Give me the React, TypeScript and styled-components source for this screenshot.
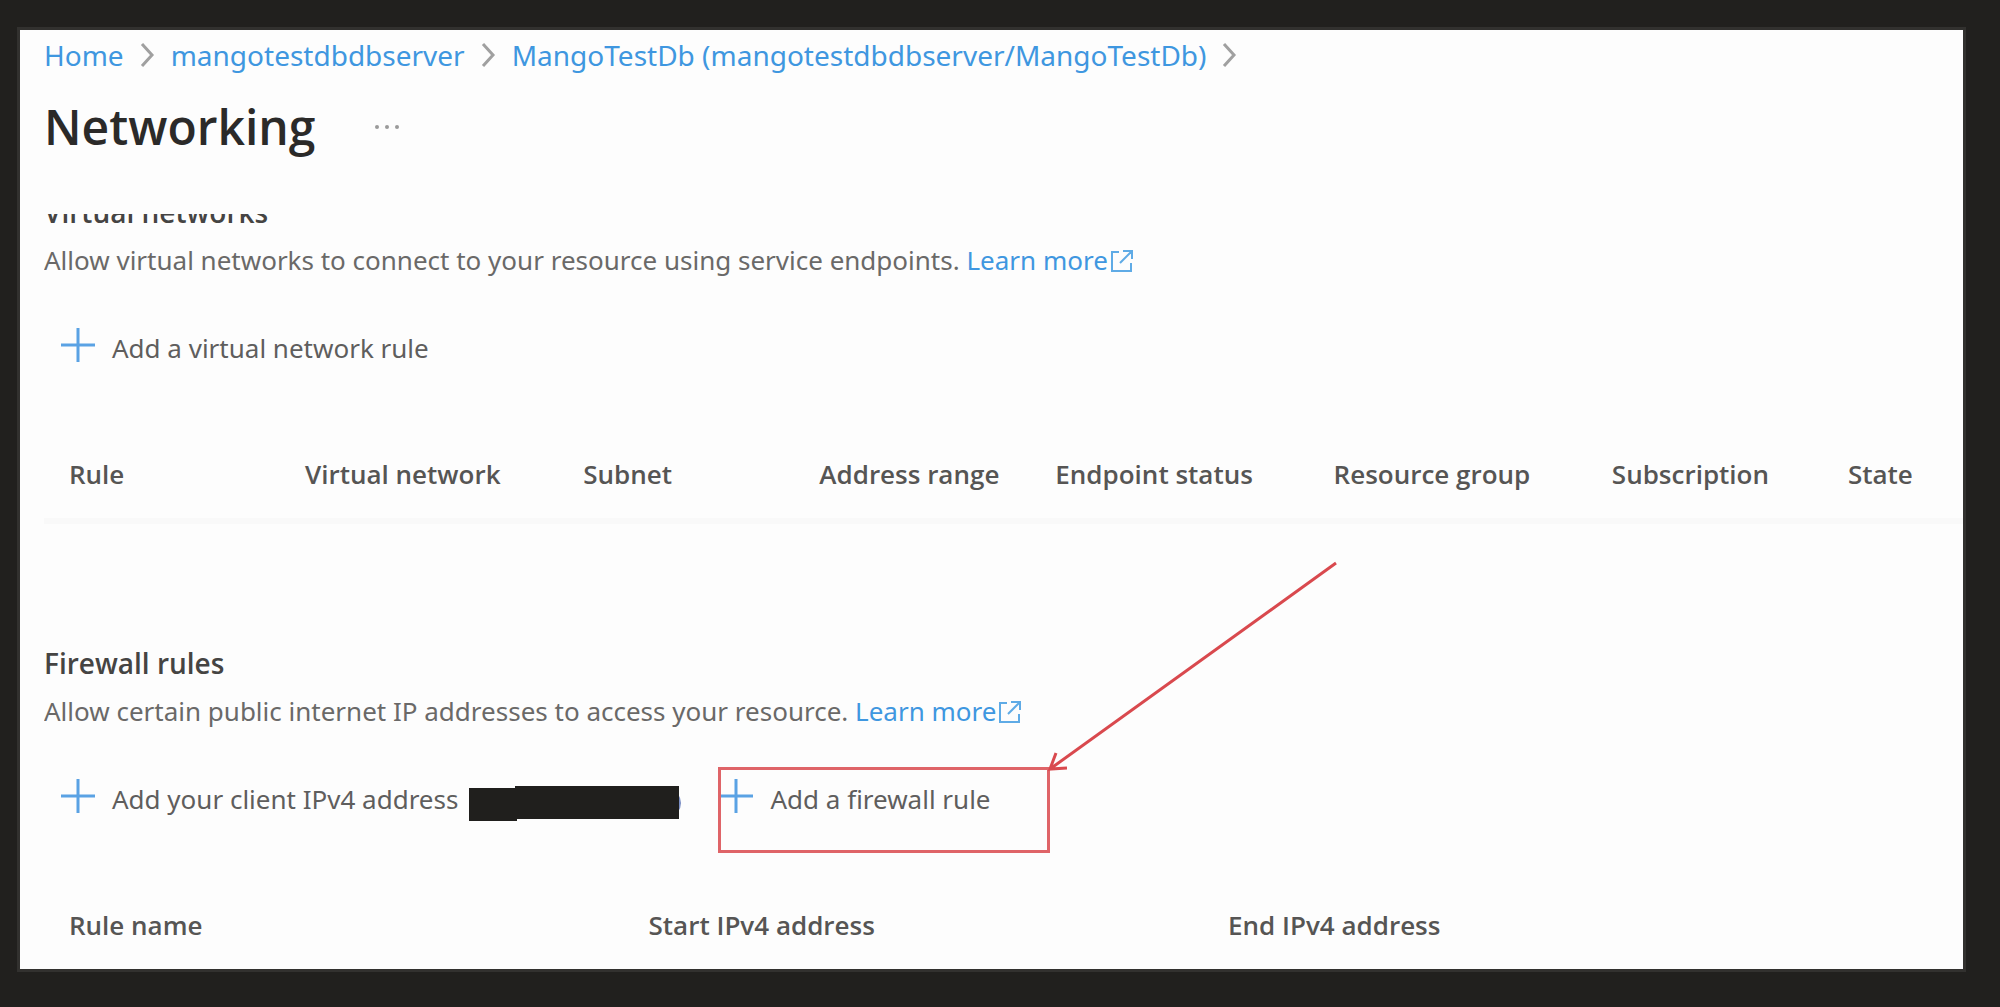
import React from "react";
import styled, { createGlobalStyle } from "styled-components";

const GlobalStyle = createGlobalStyle`
  * { box-sizing: border-box; }
  body {
    margin: 0;
    background: #21201e;
    font-family: "Noto Sans", "Open Sans", sans-serif;
    font-size: 26px;
    line-height: 36px;
    color: #6a6968;
  }
`;

const Page = styled.div`
  padding: 30px 37px 36px 20px;
`;

const Panel = styled.main`
  background: #fdfdfd;
  outline: 3px solid #32312f;
  padding: 7px 0 0 24px;
  overflow: hidden;
`;

const Breadcrumb = styled.nav`
  display: flex;
  align-items: center;
  gap: 16px;
  font-size: 28px;
`;

const Link = styled.a`
  color: #3f97e0;
  text-decoration: none;
  white-space: nowrap;
`;

const ChevronIcon = styled.svg`
  width: 15px;
  height: 24px;
  fill: none;
  stroke: #a0a0a0;
  stroke-width: 3;
`;

const TitleRow = styled.header`
  display: flex;
  align-items: center;
  gap: 54px;
  margin-top: 20px;
`;

const Title = styled.h1`
  margin: 0;
  font-family: "Open Sans", "Noto Sans", sans-serif;
  font-size: 48px;
  line-height: 68px;
  font-weight: 600;
  color: #2b2a29;
`;

const MoreButton = styled.button`
  display: flex;
  padding: 4px;
  border: 0;
  background: none;
  fill: #9a9a9a;
`;

const ScrollArea = styled.div`
  margin-top: 53px;
  overflow: hidden;
`;

const Heading = styled.h2<{ $scrolled?: boolean }>`
  margin: ${(p) => (p.$scrolled ? "-20px 0 0" : "0")};
  font-family: "Open Sans", "Noto Sans", sans-serif;
  font-size: 28px;
  line-height: 36px;
  font-weight: 600;
  color: #454443;
`;

const Description = styled.p`
  margin: 0;
  padding-top: 12px;
`;

const ExternalIcon = styled.svg`
  width: 24px;
  height: 24px;
  margin-left: 2px;
  vertical-align: -3px;
  fill: none;
  stroke: #5fabe6;
  stroke-width: 2;
`;

const Commands = styled.div`
  display: flex;
  align-items: center;
  padding: 44px 0 0 16px;
  height: 96px;
`;

const CommandButton = styled.button`
  display: flex;
  align-items: center;
  gap: 16px;
  padding: 0;
  border: 0;
  background: none;
  font: inherit;
  color: #5f5e5d;
  white-space: nowrap;
`;

const PlusIcon = styled.svg`
  width: 36px;
  height: 36px;
  margin-top: -6px;
  fill: none;
  stroke: #5aa2e4;
  stroke-width: 3;
`;

const Redaction = styled.svg`
  width: 214px;
  height: 38px;
  margin: 8px 36px 0 10px;
`;

const Callout = styled.div`
  position: relative;
`;

const CalloutBox = styled.span`
  position: absolute;
  left: 0;
  top: -14px;
  width: 332px;
  height: 86px;
  border: 3px solid #df6468;
  pointer-events: none;
`;

const CalloutArrow = styled.svg`
  position: absolute;
  left: 324px;
  top: -224px;
  width: 300px;
  height: 220px;
  fill: none;
  stroke: #d9494e;
  stroke-width: 3;
  pointer-events: none;
`;

const Table = styled.table<{ $ruled?: boolean }>`
  width: 100%;
  margin-top: 54px;
  table-layout: fixed;
  border-spacing: 0;
  border-bottom: ${(p) => (p.$ruled ? "6px solid #f9f9f9" : "0")};
`;

const HeaderCell = styled.th<{ $width?: string }>`
  width: ${(p) => p.$width ?? "auto"};
  padding: 28px 0 26px 25px;
  text-align: left;
  font-family: "Open Sans", "Noto Sans", sans-serif;
  font-weight: 600;
  color: #565554;
  white-space: nowrap;
`;

const Section = styled.section`
  padding-top: 121px;
`;

const Chevron = () => (
  <ChevronIcon viewBox="0 0 15 24" aria-hidden="true">
    <path d="M2 1 L12 12 L2 23" />
  </ChevronIcon>
);

const Plus = () => (
  <PlusIcon viewBox="0 0 36 36" aria-hidden="true">
    <path d="M18 1V35M1 18H35" />
  </PlusIcon>
);

const LearnMore = () => (
  <Link href="#">
    Learn more
    <ExternalIcon viewBox="0 0 24 24" aria-hidden="true">
      <path d="M9 3H2V22H21V14M13 2H22V10M22 2L10 14" />
    </ExternalIcon>
  </Link>
);

const networkColumns = [
  { name: "Rule", width: "12.3%" },
  { name: "Virtual network", width: "14.5%" },
  { name: "Subnet", width: "12.3%" },
  { name: "Address range", width: "12.3%" },
  { name: "Endpoint status", width: "14.5%" },
  { name: "Resource group", width: "14.5%" },
  { name: "Subscription", width: "12.3%" },
  { name: "State" },
];

const firewallColumns = [
  { name: "Rule name", width: "30.2%" },
  { name: "Start IPv4 address", width: "30.2%" },
  { name: "End IPv4 address" },
];

type Column = { name: string; width?: string };

const RuleTable = ({ columns, ruled }: { columns: Column[]; ruled?: boolean }) => (
  <Table $ruled={ruled}>
    <thead>
      <tr>
        {columns.map((c) => (
          <HeaderCell key={c.name} scope="col" $width={c.width}>
            {c.name}
          </HeaderCell>
        ))}
      </tr>
    </thead>
  </Table>
);

export default function App() {
  return (
    <Page>
      <GlobalStyle />
      <Panel>
        <Breadcrumb aria-label="Breadcrumb">
          <Link href="#">Home</Link>
          <Chevron />
          <Link href="#">mangotestdbdbserver</Link>
          <Chevron />
          <Link href="#">MangoTestDb (mangotestdbdbserver/MangoTestDb)</Link>
          <Chevron />
        </Breadcrumb>
        <TitleRow>
          <Title>Networking</Title>
          <MoreButton aria-label="More options">
            <svg width="28" height="6" viewBox="0 0 28 6">
              <circle cx="4" cy="3" r="2" />
              <circle cx="14" cy="3" r="2" />
              <circle cx="24" cy="3" r="2" />
            </svg>
          </MoreButton>
        </TitleRow>
        <ScrollArea>
          <Heading $scrolled>Virtual networks</Heading>
          <Description>
            Allow virtual networks to connect to your resource using service endpoints. <LearnMore />
          </Description>
          <Commands>
            <CommandButton>
              <Plus />
              Add a virtual network rule
            </CommandButton>
          </Commands>
          <RuleTable columns={networkColumns} ruled />
          <Section>
            <Heading>Firewall rules</Heading>
            <Description>
              Allow certain public internet IP addresses to access your resource. <LearnMore />
            </Description>
            <Commands>
              <CommandButton>
                <Plus />
                Add your client IPv4 address
              </CommandButton>
              <Redaction viewBox="0 0 214 38" aria-hidden="true">
                <path d="M209 10Q215 19 209 28" fill="none" stroke="#7c8fc4" strokeWidth="2" />
                <path d="M1 4H47V2H211V35H49V37H1Z" fill="#201f1d" />
              </Redaction>
              <Callout>
                <CommandButton>
                  <Plus />
                  Add a firewall rule
                </CommandButton>
                <CalloutBox />
                <CalloutArrow viewBox="0 0 300 220" aria-hidden="true">
                  <path d="M294 6L8 212M14 196L8 212L25 211" />
                </CalloutArrow>
              </Callout>
            </Commands>
            <RuleTable columns={firewallColumns} />
          </Section>
        </ScrollArea>
      </Panel>
    </Page>
  );
}
